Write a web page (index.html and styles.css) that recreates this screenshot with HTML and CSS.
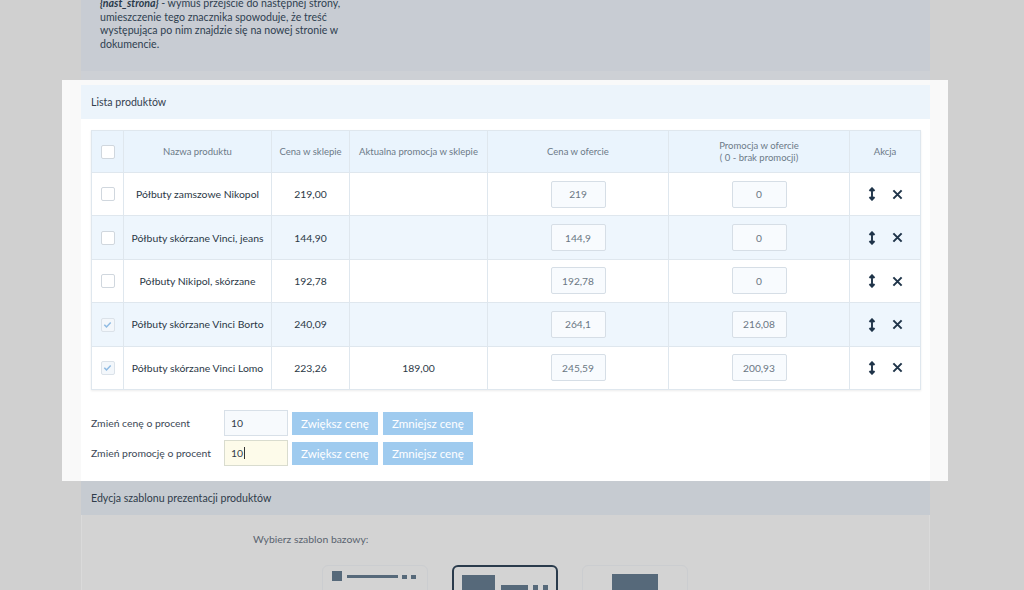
FILE: index.html
```html
<!DOCTYPE html>
<html lang="pl">
<head>
<meta charset="utf-8">
<title>Lista produktów</title>
<link rel="stylesheet" href="styles.css">
</head>
<body>
<div class="page">
  <section class="card notes-card">
    <p class="notes"><b><i>{nast_strona}</i></b> - wymuś przejście do następnej strony,<br>umieszczenie tego znacznika spowoduje, że treść<br>występująca po nim znajdzie się na nowej stronie w<br>dokumencie.</p>
  </section>
  <div class="gap"></div>
  <section class="highlight">
    <div class="card products">
      <div class="card-head">Lista produktów</div>
      <div class="card-body">
        <table class="grid">
          <colgroup>
            <col class="c-chk"><col class="c-name"><col class="c-price"><col class="c-promo"><col class="c-offer"><col class="c-offer"><col class="c-act">
          </colgroup>
          <thead>
            <tr>
              <th><span class="chk"></span></th>
              <th>Nazwa produktu</th>
              <th>Cena w sklepie</th>
              <th>Aktualna promocja w sklepie</th>
              <th>Cena w ofercie</th>
              <th>Promocja w ofercie<br>( 0 - brak promocji)</th>
              <th>Akcja</th>
            </tr>
          </thead>
          <tbody>
            <tr>
              <td><span class="chk"></span></td>
              <td>Półbuty zamszowe Nikopol</td>
              <td>219,00</td>
              <td></td>
              <td><span class="val">219</span></td>
              <td><span class="val">0</span></td>
              <td class="act"><svg class="ico" viewBox="0 0 8 14" width="8" height="14"><path d="M4 1.5v11M1.5 4L4 1.3 6.5 4M1.5 10L4 12.7 6.5 10" fill="none" stroke="#1f3449" stroke-width="1.9"/></svg><svg class="ico" viewBox="0 0 12 12" width="11" height="11"><path d="M1.5 1.5l9 9M10.5 1.5l-9 9" stroke="#1f3449" stroke-width="2.2"/></svg></td>
            </tr>
            <tr class="alt">
              <td><span class="chk"></span></td>
              <td>Półbuty skórzane Vinci, jeans</td>
              <td>144,90</td>
              <td></td>
              <td><span class="val">144,9</span></td>
              <td><span class="val">0</span></td>
              <td class="act"><svg class="ico" viewBox="0 0 8 14" width="8" height="14"><path d="M4 1.5v11M1.5 4L4 1.3 6.5 4M1.5 10L4 12.7 6.5 10" fill="none" stroke="#1f3449" stroke-width="1.9"/></svg><svg class="ico" viewBox="0 0 12 12" width="11" height="11"><path d="M1.5 1.5l9 9M10.5 1.5l-9 9" stroke="#1f3449" stroke-width="2.2"/></svg></td>
            </tr>
            <tr>
              <td><span class="chk"></span></td>
              <td>Półbuty Nikipol, skórzane</td>
              <td>192,78</td>
              <td></td>
              <td><span class="val">192,78</span></td>
              <td><span class="val">0</span></td>
              <td class="act"><svg class="ico" viewBox="0 0 8 14" width="8" height="14"><path d="M4 1.5v11M1.5 4L4 1.3 6.5 4M1.5 10L4 12.7 6.5 10" fill="none" stroke="#1f3449" stroke-width="1.9"/></svg><svg class="ico" viewBox="0 0 12 12" width="11" height="11"><path d="M1.5 1.5l9 9M10.5 1.5l-9 9" stroke="#1f3449" stroke-width="2.2"/></svg></td>
            </tr>
            <tr class="alt">
              <td><span class="chk on"><svg viewBox="0 0 12 12" width="11" height="11"><path d="M2.5 6.2l2.4 2.4 4.6-4.8" fill="none" stroke="#8fbbe3" stroke-width="1.6"/></svg></span></td>
              <td>Półbuty skórzane Vinci Borto</td>
              <td>240,09</td>
              <td></td>
              <td><span class="val">264,1</span></td>
              <td><span class="val">216,08</span></td>
              <td class="act"><svg class="ico" viewBox="0 0 8 14" width="8" height="14"><path d="M4 1.5v11M1.5 4L4 1.3 6.5 4M1.5 10L4 12.7 6.5 10" fill="none" stroke="#1f3449" stroke-width="1.9"/></svg><svg class="ico" viewBox="0 0 12 12" width="11" height="11"><path d="M1.5 1.5l9 9M10.5 1.5l-9 9" stroke="#1f3449" stroke-width="2.2"/></svg></td>
            </tr>
            <tr>
              <td><span class="chk on"><svg viewBox="0 0 12 12" width="11" height="11"><path d="M2.5 6.2l2.4 2.4 4.6-4.8" fill="none" stroke="#8fbbe3" stroke-width="1.6"/></svg></span></td>
              <td>Półbuty skórzane Vinci Lomo</td>
              <td>223,26</td>
              <td>189,00</td>
              <td><span class="val">245,59</span></td>
              <td><span class="val">200,93</span></td>
              <td class="act"><svg class="ico" viewBox="0 0 8 14" width="8" height="14"><path d="M4 1.5v11M1.5 4L4 1.3 6.5 4M1.5 10L4 12.7 6.5 10" fill="none" stroke="#1f3449" stroke-width="1.9"/></svg><svg class="ico" viewBox="0 0 12 12" width="11" height="11"><path d="M1.5 1.5l9 9M10.5 1.5l-9 9" stroke="#1f3449" stroke-width="2.2"/></svg></td>
            </tr>
          </tbody>
        </table>

        <div class="controls">
          <div class="ctrl-row">
            <span class="ctrl-label">Zmień cenę o procent</span>
            <span class="field">10</span>
            <span class="btn">Zwiększ cenę</span>
            <span class="btn">Zmniejsz cenę</span>
          </div>
          <div class="ctrl-row">
            <span class="ctrl-label">Zmień promocję o procent</span>
            <span class="field focus">10<span class="caret"></span></span>
            <span class="btn">Zwiększ cenę</span>
            <span class="btn">Zmniejsz cenę</span>
          </div>
        </div>
      </div>
    </div>
  </section>
  <section class="card tpl">
    <div class="tpl-head">Edycja szablonu prezentacji produktów</div>
    <div class="tpl-body">
      <div class="tpl-label">Wybierz szablon bazowy:</div>
      <div class="thumbs">
        <div class="thumb t1"><span class="sq"></span><span class="bar"></span><span class="dot"></span><span class="dot"></span></div>
        <div class="thumb t2 sel"><span class="big"></span><span class="bar"></span><span class="dot"></span><span class="dot"></span></div>
        <div class="thumb t3"><span class="big"></span></div>
      </div>
    </div>
  </section>
</div>
</body>
</html>
```
FILE: styles.css
```css
* { box-sizing: border-box; }
html, body { margin: 0; padding: 0; }
body {
  background: #d0d0d0;
  font-family: "Lato", "Open Sans", sans-serif;
  font-size: 10.4px;
  color: #34414f;
  height: 590px;
  overflow: hidden;
}
.page {
  width: 849px;
  margin-left: 81px;
  background: #cdd0d5;
}
.notes-card {
  display: flow-root;
  background: #c8ccd3;
  padding: 0 19px;
  height: 71px;
}
.notes {
  margin: -3px 0 0;
  line-height: 13.5px;
  color: #2f3f50;
  font-size: 10.6px;
}
.notes b { color: #2a3a4b; }
.gap { height: 9px; }
.highlight {
  margin: 0 -18px 0 -19px;
  padding: 5px 18px 0 19px;
  background: #f9f9f9;
  height: 401px;
}
.products { background: #fff; height: 396px; }
.card-head {
  height: 34px;
  background: #ecf4fb;
  padding-left: 10px;
  display: flex;
  align-items: center;
  color: #34414f;
  font-size: 10.6px;
}
.card-body { padding: 11px 10px 0; }
.grid {
  width: 829px;
  table-layout: fixed;
  border-collapse: collapse;
  border: 1px solid #dce4eb;
  box-shadow: 0 1px 2px rgba(0,0,0,0.08);
}
.c-chk { width: 32px; }
.c-name { width: 148px; }
.c-price { width: 78px; }
.c-promo { width: 138px; }
.c-offer { width: 181px; }
.c-act { width: 71px; }
.grid th, .grid td {
  border: 1px solid #dfe7ee;
  text-align: center;
  vertical-align: middle;
  padding: 0;
}
.grid th {
  height: 42px;
  background: #eaf4fd;
  font-weight: normal;
  font-size: 9.5px;
  line-height: 11.5px;
  color: #6c7a88;
}
.grid td {
  height: 43.4px;
  font-size: 10.4px;
  color: #2b3846;
}
.grid tr.alt td { background: #eef6fd; }
.chk {
  display: inline-flex;
  align-items: center;
  justify-content: center;
  width: 14px;
  height: 14px;
  border: 1px solid #d0d7de;
  border-radius: 2px;
  background: #fff;
  vertical-align: middle;
}
.chk.on { background: #f3f7fb; border-color: #dbe2e9; }
.val {
  display: inline-flex;
  align-items: center;
  justify-content: center;
  width: 55px;
  height: 27px;
  border: 1px solid #d6dee6;
  border-radius: 2px;
  background: #f8fbfe;
  color: #6a7783;
  font-size: 10.2px;
}
.act { white-space: nowrap; }
.ico { display: inline-block; vertical-align: middle; margin: 0 8px; }
.controls { margin-top: 21px; display: flex; flex-direction: column; gap: 5px; }
.ctrl-row { display: flex; align-items: center; height: 25px; }
.ctrl-label { width: 133px; color: #3c4856; }
.field {
  width: 64px;
  height: 26px;
  border: 1px solid #d8e0e8;
  background: #f7fafd;
  display: flex;
  align-items: center;
  padding-left: 6px;
  color: #2f3c4a;
  font-size: 10.4px;
  margin-right: 4px;
}
.field.focus { background: #fdfbea; border-color: #d9dccf; }
.caret { display: inline-block; width: 1px; height: 12px; background: #333; margin-left: 1px; }
.btn {
  height: 23px;
  padding: 0 9px;
  background: #9fcbef;
  color: #fff;
  font-size: 11.6px;
  display: flex;
  align-items: center;
  margin-right: 5px;
}
.tpl { background: #d3d3d3; }
.tpl-head {
  height: 34px;
  background: #c6cbd1;
  padding-left: 10px;
  display: flex;
  align-items: center;
  color: #2f3c4a;
  font-size: 10.6px;
}
.tpl-body {
  border-left: 1px solid #dadada;
  border-right: 1px solid #dadada;
  padding: 18px 0 0;
  height: 80px;
}
.tpl-label { padding-left: 171px; color: #5a6470; font-size: 10.4px; }
.thumbs { display: flex; justify-content: center; gap: 24px; margin-top: 20px; padding-right: 2px; }
.thumb {
  width: 106px;
  height: 40px;
  border: 1px solid #cbcdd0;
  border-radius: 6px;
  display: flex;
  align-items: flex-start;
  padding: 5px 9px;
  gap: 5px;
}
.thumb.sel { border: 2px solid #2a3b4c; padding: 8px 8px; }
.thumb span { background: #56697a; display: block; }
.t1 .sq { width: 10px; height: 10px; }
.t1 .bar { width: 51px; height: 3px; margin-top: 4px; }
.t1 .dot { width: 5px; height: 4px; margin-top: 3.5px; margin-left: -1px; }
.t2 .big { width: 34px; height: 30px; }
.t2 .bar { width: 28px; height: 5px; margin-top: 10px; margin-left: 1px; }
.t2 .dot { width: 5px; height: 5px; margin-top: 10px; }
.t3 { justify-content: center; padding-top: 8px; }
.t3 .big { width: 46px; height: 30px; }
```
